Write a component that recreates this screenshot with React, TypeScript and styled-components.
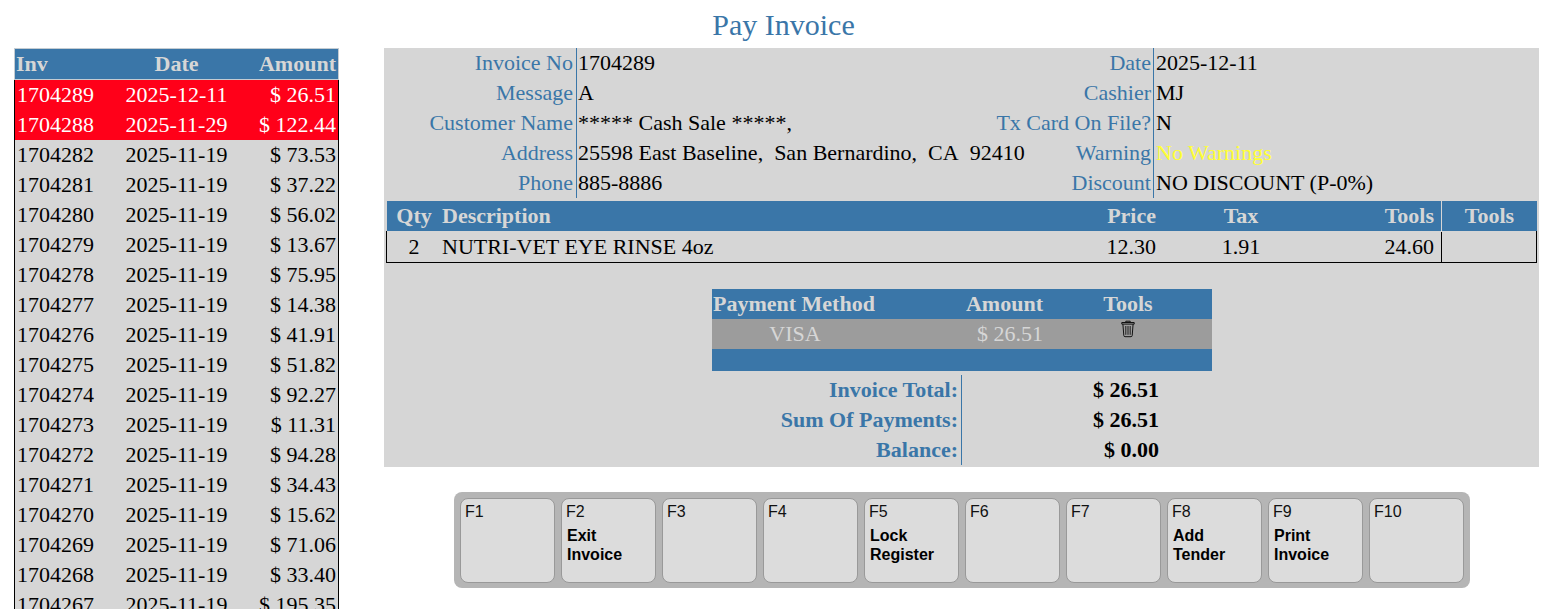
import React from 'react';
import styled, { createGlobalStyle } from 'styled-components';

const BLUE = '#3a76a8';
const GREY = '#d6d6d6';

const GlobalStyle = createGlobalStyle`
  html, body {
    margin: 0;
    padding: 0;
    background: #fff;
    overflow: hidden;
  }
  body {
    font-family: "Liberation Serif", "Times New Roman", serif;
    font-size: 22px;
    line-height: 30px;
    color: #000;
  }
`;

const Page = styled.div`
  height: 609px;
  overflow: hidden;
`;

const Title = styled.h1`
  margin: 0;
  height: 48px;
  padding: 9px 0 0 15px;
  box-sizing: border-box;
  text-align: center;
  font-size: 30px;
  font-weight: normal;
  line-height: 32px;
  color: ${BLUE};
`;

const Columns = styled.div`
  display: flex;
  align-items: flex-start;
  padding-left: 14px;
`;

const Sidebar = styled.div`
  width: 325px;
  flex: none;
`;

const SideRow = styled.div<{ $active?: boolean }>`
  display: grid;
  grid-template-columns: 95px 133px 1fr;
  height: 30px;
  box-sizing: content-box;
  padding-right: 2px;
  border-left: 1px solid #000;
  border-right: 1px solid #000;
  width: 321px;
  background: ${(p) => (p.$active ? '#ff0019' : GREY)};
  color: ${(p) => (p.$active ? '#fff' : '#000')};
  white-space: nowrap;
`;

const SideHead = styled(SideRow)`
  border: 1px solid #c4ccd2;
  background: ${BLUE};
  color: ${GREY};
  font-weight: bold;
`;

const SideInv = styled.span<{ $head?: boolean }>`
  padding-left: ${(p) => (p.$head ? '1px' : '2px')};
`;

const SideDate = styled.span`
  text-align: center;
`;

const SideAmount = styled.span`
  text-align: right;
`;

const Content = styled.div`
  width: 1155px;
  margin-left: 45px;
  flex: none;
`;

const Panel = styled.div`
  height: 419px;
  background: ${GREY};
`;

const InfoGrid = styled.div`
  display: grid;
  grid-template-columns: 193px 402px 175px 1fr;
  grid-auto-rows: 30px;
  height: 153px;
  white-space: nowrap;
`;

const InfoLabel = styled.div`
  text-align: right;
  padding-right: 3px;
  color: ${BLUE};
  border-right: 1px solid ${BLUE};
`;

const InfoLabelRight = styled(InfoLabel)`
  padding-right: 2px;
`;

const InfoValue = styled.div`
  padding-left: 1px;
`;

const InfoValueRight = styled.div<{ $warn?: boolean }>`
  padding-left: 2px;
  color: ${(p) => (p.$warn ? '#ffff33' : '#000')};
`;

const ItemTable = styled.div`
  margin-left: 3px;
  width: 1150px;
`;

const ItemRow = styled.div<{ $head?: boolean }>`
  display: grid;
  grid-template-columns: 54px 600px 115px 170px 115px 96px;
  height: 30px;
  white-space: nowrap;
  ${(p) =>
    p.$head
      ? `
    background: ${BLUE};
    color: ${GREY};
    font-weight: bold;
  `
      : `
    height: 32px;
    margin-left: -1px;
    border-left: 1px solid #000;
    border-right: 1px solid #000;
    border-bottom: 1px solid #000;
    box-sizing: border-box;
    padding-top: 1px;
  `}
`;

const ItemCell = styled.div<{ $align?: string; $divider?: string }>`
  text-align: ${(p) => p.$align || 'left'};
  ${(p) => (p.$divider ? `border-left: 1px solid ${p.$divider};` : '')}
`;

const DescCell = styled(ItemCell)`
  padding-left: 1px;
`;

const ToolsCell = styled(ItemCell)`
  padding-right: 7px;
`;

const PayTable = styled.div`
  width: 500px;
  margin: 26px 0 0 328px;
`;

const PayRow = styled.div<{ $kind: 'head' | 'line' }>`
  display: grid;
  grid-template-columns: 166px 167px 167px;
  height: 30px;
  white-space: nowrap;
  background: ${(p) => (p.$kind === 'head' ? BLUE : '#9c9c9c')};
  color: ${GREY};
  font-weight: ${(p) => (p.$kind === 'head' ? 'bold' : 'normal')};
`;

const PayFoot = styled.div`
  height: 22px;
  background: ${BLUE};
`;

const PayMethod = styled.div<{ $head?: boolean }>`
  text-align: ${(p) => (p.$head ? 'left' : 'center')};
  padding-left: ${(p) => (p.$head ? '1px' : '0')};
`;

const PayAmount = styled.div`
  text-align: right;
  padding-right: 2px;
`;

const PayTools = styled.div`
  text-align: center;
  padding-right: 1px;
`;

const TrashIcon = styled.svg`
  display: inline-block;
  width: 16px;
  height: 18px;
  vertical-align: top;
  margin-top: 1px;
`;

const Totals = styled.div`
  display: grid;
  grid-template-columns: 250px 197px;
  grid-auto-rows: 30px;
  width: 447px;
  margin: 4px 0 0 328px;
  font-weight: bold;
`;

const TotalLabel = styled.div`
  text-align: right;
  padding-right: 3px;
  color: ${BLUE};
  border-right: 1px solid ${BLUE};
`;

const TotalValue = styled.div`
  text-align: right;
`;

const KeyBar = styled.div`
  display: flex;
  gap: 6px;
  box-sizing: border-box;
  width: 1016px;
  height: 96px;
  margin: 25px 0 0 70px;
  padding: 6px;
  border-radius: 8px;
  background: #b5b5b5;
  font-family: "Liberation Sans", Arial, sans-serif;
  font-size: 16px;
  line-height: 19px;
`;

const Key = styled.div`
  flex: 1;
  height: 85px;
  box-sizing: border-box;
  padding: 3px 3px 0 4px;
  border: 1px solid #999;
  border-radius: 8px;
  background: #dcdcdc;
  color: #111;
`;

const KeyName = styled.div`
  height: 24px;
`;

const KeyLabel = styled.div`
  font-weight: bold;
  color: #000;
  padding-left: 1px;
`;

const invoices = [
  ['1704289', '2025-12-11', '$ 26.51', true],
  ['1704288', '2025-11-29', '$ 122.44', true],
  ['1704282', '2025-11-19', '$ 73.53'],
  ['1704281', '2025-11-19', '$ 37.22'],
  ['1704280', '2025-11-19', '$ 56.02'],
  ['1704279', '2025-11-19', '$ 13.67'],
  ['1704278', '2025-11-19', '$ 75.95'],
  ['1704277', '2025-11-19', '$ 14.38'],
  ['1704276', '2025-11-19', '$ 41.91'],
  ['1704275', '2025-11-19', '$ 51.82'],
  ['1704274', '2025-11-19', '$ 92.27'],
  ['1704273', '2025-11-19', '$ 11.31'],
  ['1704272', '2025-11-19', '$ 94.28'],
  ['1704271', '2025-11-19', '$ 34.43'],
  ['1704270', '2025-11-19', '$ 15.62'],
  ['1704269', '2025-11-19', '$ 71.06'],
  ['1704268', '2025-11-19', '$ 33.40'],
  ['1704267', '2025-11-19', '$ 195.35'],
];

const info = [
  ['Invoice No', '1704289', 'Date', '2025-12-11'],
  ['Message', 'A', 'Cashier', 'MJ'],
  ['Customer Name', '***** Cash Sale *****,', 'Tx Card On File?', 'N'],
  ['Address', '25598 East Baseline,\u00a0 San Bernardino,\u00a0 CA\u00a0 92410', 'Warning', 'No Warnings'],
  ['Phone', '885-8886', 'Discount', 'NO DISCOUNT (P-0%)'],
];

const keys = [
  ['F1'],
  ['F2', 'Exit', 'Invoice'],
  ['F3'],
  ['F4'],
  ['F5', 'Lock', 'Register'],
  ['F6'],
  ['F7'],
  ['F8', 'Add', 'Tender'],
  ['F9', 'Print', 'Invoice'],
  ['F10'],
];

const Trash = () => (
  <TrashIcon viewBox="0 0 16 18" fill="none" stroke="#111" strokeWidth="1">
    <path d="M5.8 2.4V1.2h4.4v1.2" />
    <path d="M1.8 2.5h12.4v1.6H1.8z" />
    <path d="M2.9 4.1l.9 11.4c.1.8.5 1.2 1.2 1.2h6c.7 0 1.1-.4 1.2-1.2l.9-11.4" />
    <path d="M5.8 6v8.8M8 6v8.8M10.2 6v8.8" strokeWidth="0.9" />
  </TrashIcon>
);

export default function App() {
  return (
    <Page>
      <GlobalStyle />
      <Title>Pay Invoice</Title>
      <Columns>
        <Sidebar>
          <SideHead>
            <SideInv $head>Inv</SideInv>
            <SideDate>Date</SideDate>
            <SideAmount>Amount</SideAmount>
          </SideHead>
          {invoices.map((row) => (
            <SideRow key={row[0] as string} $active={!!row[3]}>
              <SideInv>{row[0]}</SideInv>
              <SideDate>{row[1]}</SideDate>
              <SideAmount>{row[2]}</SideAmount>
            </SideRow>
          ))}
        </Sidebar>
        <Content>
          <Panel>
            <InfoGrid>
              {info.map((row) => (
                <React.Fragment key={row[0]}>
                  <InfoLabel>{row[0]}</InfoLabel>
                  <InfoValue>{row[1]}</InfoValue>
                  <InfoLabelRight>{row[2]}</InfoLabelRight>
                  <InfoValueRight $warn={row[2] === 'Warning'}>{row[3]}</InfoValueRight>
                </React.Fragment>
              ))}
            </InfoGrid>
            <ItemTable>
              <ItemRow $head>
                <ItemCell $align="center">Qty</ItemCell>
                <DescCell>Description</DescCell>
                <ItemCell $align="right">Price</ItemCell>
                <ItemCell $align="center">Tax</ItemCell>
                <ToolsCell $align="right">Tools</ToolsCell>
                <ItemCell $align="center" $divider={GREY}>Tools</ItemCell>
              </ItemRow>
              <ItemRow>
                <ItemCell $align="center">2</ItemCell>
                <DescCell>NUTRI-VET EYE RINSE 4oz</DescCell>
                <ItemCell $align="right">12.30</ItemCell>
                <ItemCell $align="center">1.91</ItemCell>
                <ToolsCell $align="right">24.60</ToolsCell>
                <ItemCell $divider="#000" />
              </ItemRow>
            </ItemTable>
            <PayTable>
              <PayRow $kind="head">
                <PayMethod $head>Payment Method</PayMethod>
                <PayAmount>Amount</PayAmount>
                <PayTools>Tools</PayTools>
              </PayRow>
              <PayRow $kind="line">
                <PayMethod>VISA</PayMethod>
                <PayAmount>$ 26.51</PayAmount>
                <PayTools>
                  <Trash />
                </PayTools>
              </PayRow>
              <PayFoot />
            </PayTable>
            <Totals>
              <TotalLabel>Invoice Total:</TotalLabel>
              <TotalValue>$ 26.51</TotalValue>
              <TotalLabel>Sum Of Payments:</TotalLabel>
              <TotalValue>$ 26.51</TotalValue>
              <TotalLabel>Balance:</TotalLabel>
              <TotalValue>$ 0.00</TotalValue>
            </Totals>
          </Panel>
          <KeyBar>
            {keys.map((k) => (
              <Key key={k[0]}>
                <KeyName>{k[0]}</KeyName>
                {k.slice(1).map((line) => (
                  <KeyLabel key={line}>{line}</KeyLabel>
                ))}
              </Key>
            ))}
          </KeyBar>
        </Content>
      </Columns>
    </Page>
  );
}
